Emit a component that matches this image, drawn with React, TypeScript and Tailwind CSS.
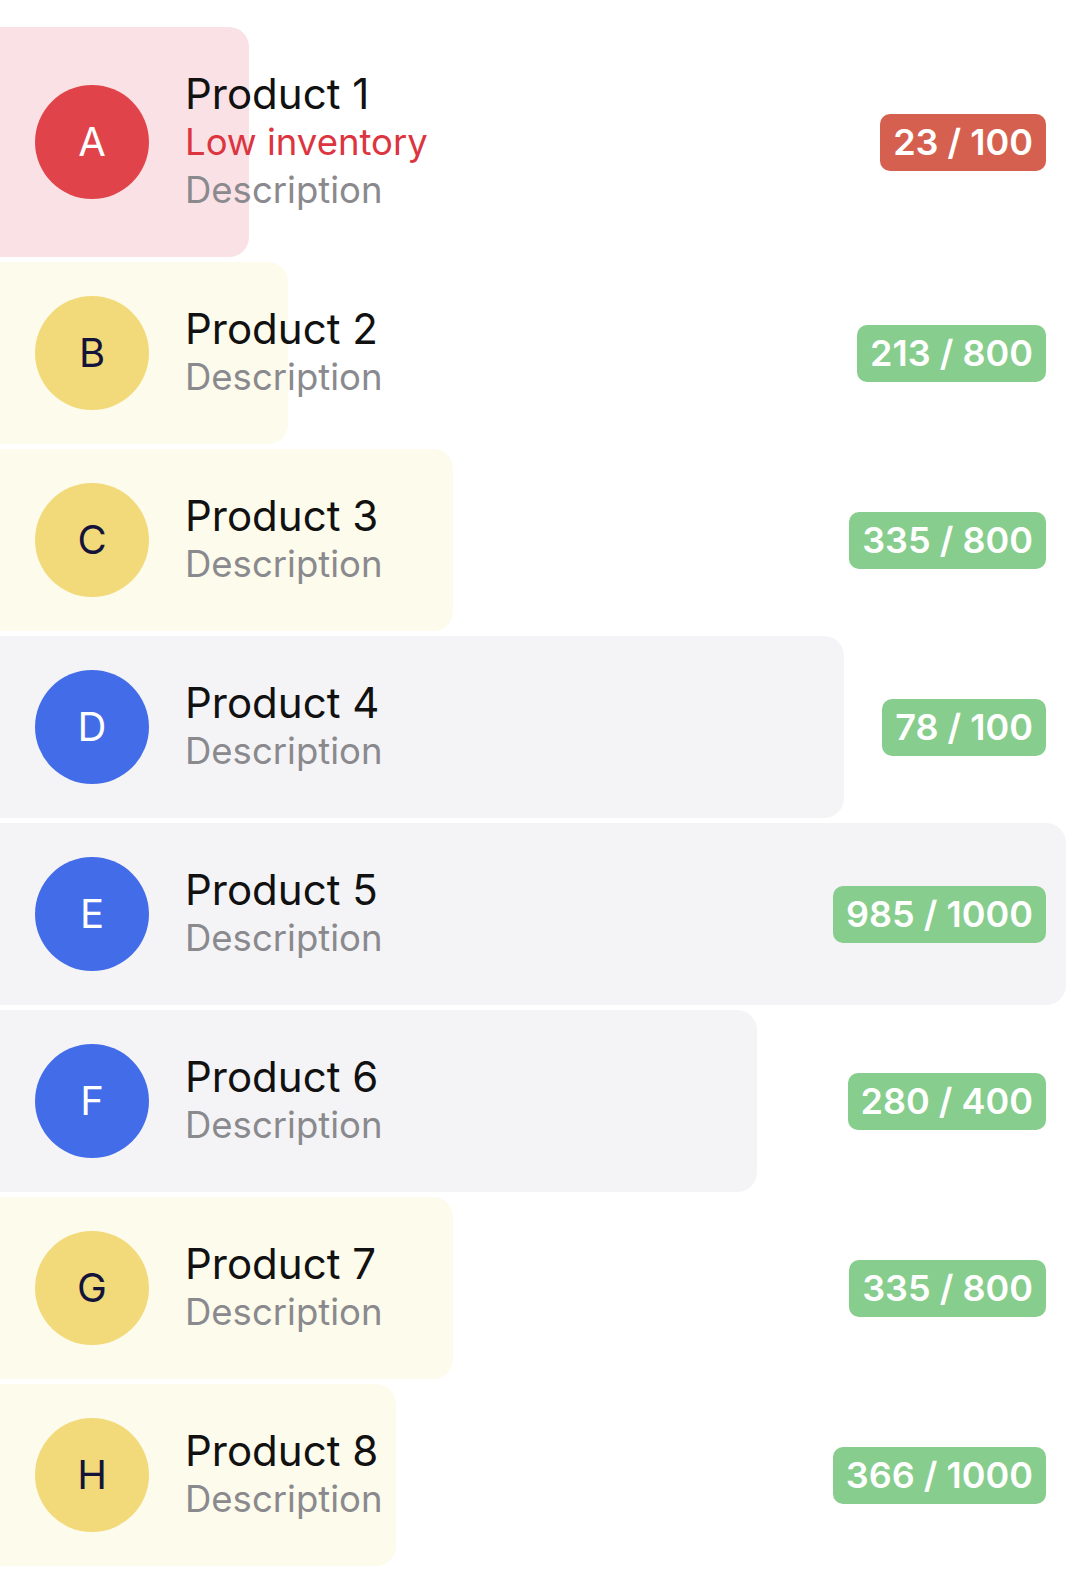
import React from "react";

type Item = {
  letter: string;
  name: string;
  qty: number;
  max: number;
  kind: "red" | "yellow" | "blue";
  low?: boolean;
};

const items: Item[] = [
  { letter: "A", name: "Product 1", qty: 23, max: 100, kind: "red", low: true },
  { letter: "B", name: "Product 2", qty: 213, max: 800, kind: "yellow" },
  { letter: "C", name: "Product 3", qty: 335, max: 800, kind: "yellow" },
  { letter: "D", name: "Product 4", qty: 78, max: 100, kind: "blue" },
  { letter: "E", name: "Product 5", qty: 985, max: 1000, kind: "blue" },
  { letter: "F", name: "Product 6", qty: 280, max: 400, kind: "blue" },
  { letter: "G", name: "Product 7", qty: 335, max: 800, kind: "yellow" },
  { letter: "H", name: "Product 8", qty: 366, max: 1000, kind: "yellow" },
];

const barClass = {
  red: "bg-[#fae1e5]",
  yellow: "bg-[#fdfbec]",
  blue: "bg-[#f4f4f6]",
};
const avatarClass = {
  red: "bg-[#e0444a] text-white",
  yellow: "bg-[#f2da7a] text-[#14143a]",
  blue: "bg-[#436ce8] text-white",
};

function Row({ item }: { item: Item }) {
  const pct = (item.qty / item.max) * 100;
  return (
    <div className="relative flex min-h-[182px] items-center">
      <div
        className={`absolute inset-y-0 left-0 rounded-r-[20px] ${barClass[item.kind]}`}
        style={{ width: `${pct}%` }}
      />
      <div
        className={`relative ml-[35px] flex h-[114px] w-[114px] shrink-0 items-center justify-center rounded-full text-[40px] leading-none ${avatarClass[item.kind]}`}
      >
        {item.letter}
      </div>
      <div className="relative ml-[36px] flex flex-1 flex-col py-[43px] leading-[48px]">
        <span className="text-[42px] text-[#111111]">{item.name}</span>
        {item.low && <span className="text-[36.5px] text-[#dc3540]">Low inventory</span>}
        <span className="text-[36.5px] text-[#8a8a8e]">Description</span>
      </div>
      <div
        className={`relative mr-[36px] rounded-[10px] px-[13px] py-[5px] text-[36px] font-semibold leading-[47px] text-white ${
          item.low ? "bg-[#d6604f]" : "bg-[#87cd8d]"
        }`}
      >
        {item.qty} / {item.max}
      </div>
    </div>
  );
}

export default function App() {
  return (
    <div
      className="flex min-h-[1571px] w-full flex-col gap-[5px] bg-white pt-[27px]"
      style={{ fontFamily: "Inter, 'Noto Sans', sans-serif" }}
    >
      {items.map((it) => (
        <Row key={it.letter} item={it} />
      ))}
    </div>
  );
}
